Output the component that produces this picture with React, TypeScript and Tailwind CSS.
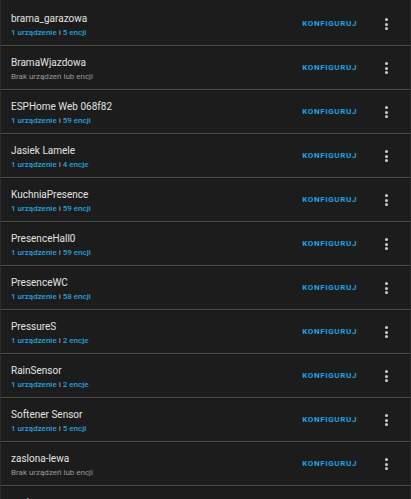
import React from 'react'

interface Entry {
  name: string
  devices?: string
  entities?: string
}

const entries: Entry[] = [
  { name: 'brama_garazowa', devices: '1 urządzenie', entities: '5 encji' },
  { name: 'BramaWjazdowa' },
  { name: 'ESPHome Web 068f82', devices: '1 urządzenie', entities: '59 encji' },
  { name: 'Jasiek Lamele', devices: '1 urządzenie', entities: '4 encje' },
  { name: 'KuchniaPresence', devices: '1 urządzenie', entities: '59 encji' },
  { name: 'PresenceHall0', devices: '1 urządzenie', entities: '59 encji' },
  { name: 'PresenceWC', devices: '1 urządzenie', entities: '58 encji' },
  { name: 'PressureS', devices: '1 urządzenie', entities: '2 encje' },
  { name: 'RainSensor', devices: '1 urządzenie', entities: '2 encje' },
  { name: 'Softener Sensor', devices: '1 urządzenie', entities: '5 encji' },
  { name: 'zaslona-lewa' },
  { name: 'zaslona-prawa' },
]

function Dots() {
  return (
    <div className="flex w-[4px] flex-col items-center gap-[1.5px]">
      <span className="h-[3px] w-[3px] rounded-full bg-[#cfcfcf]" />
      <span className="h-[3px] w-[3px] rounded-full bg-[#cfcfcf]" />
      <span className="h-[3px] w-[3px] rounded-full bg-[#cfcfcf]" />
    </div>
  )
}

export default function App() {
  return (
    <div
      className="h-[499px] w-[411px] overflow-hidden border-x border-[#2a2a2a] bg-[#1c1c1c] pt-[3px]"
      style={{ fontFamily: 'Roboto, "Noto Sans", sans-serif' }}
    >
      {entries.map((entry, index) => (
        <div key={index}>
          <div className="flex h-[42px] items-center pl-[10px] pr-[22px]">
            <div className="flex flex-1 flex-col gap-[2px] pt-[1px]">
              <div className="text-[10px] leading-[13px] text-[#e3e3e3]">{entry.name}</div>
              {entry.devices ? (
                <div className="text-[8px] font-medium leading-[11px] text-[#9a9a9a]">
                  <span className="text-[#2a9fdc]">{entry.devices}</span>
                  <span> i </span>
                  <span className="text-[#2a9fdc]">{entry.entities}</span>
                </div>
              ) : (
                <div className="text-[8px] leading-[11px] text-[#9a9a9a]">Brak urządzeń lub encji</div>
              )}
            </div>
            <div className="mr-[27px] text-[8px] font-bold tracking-[0.08em] text-[#23a1e2]">
              KONFIGURUJ
            </div>
            <Dots />
          </div>
          <div className="h-px bg-[#4e4e4e]" />
          <div className="h-px bg-[#141414]" />
        </div>
      ))}
    </div>
  )
}
